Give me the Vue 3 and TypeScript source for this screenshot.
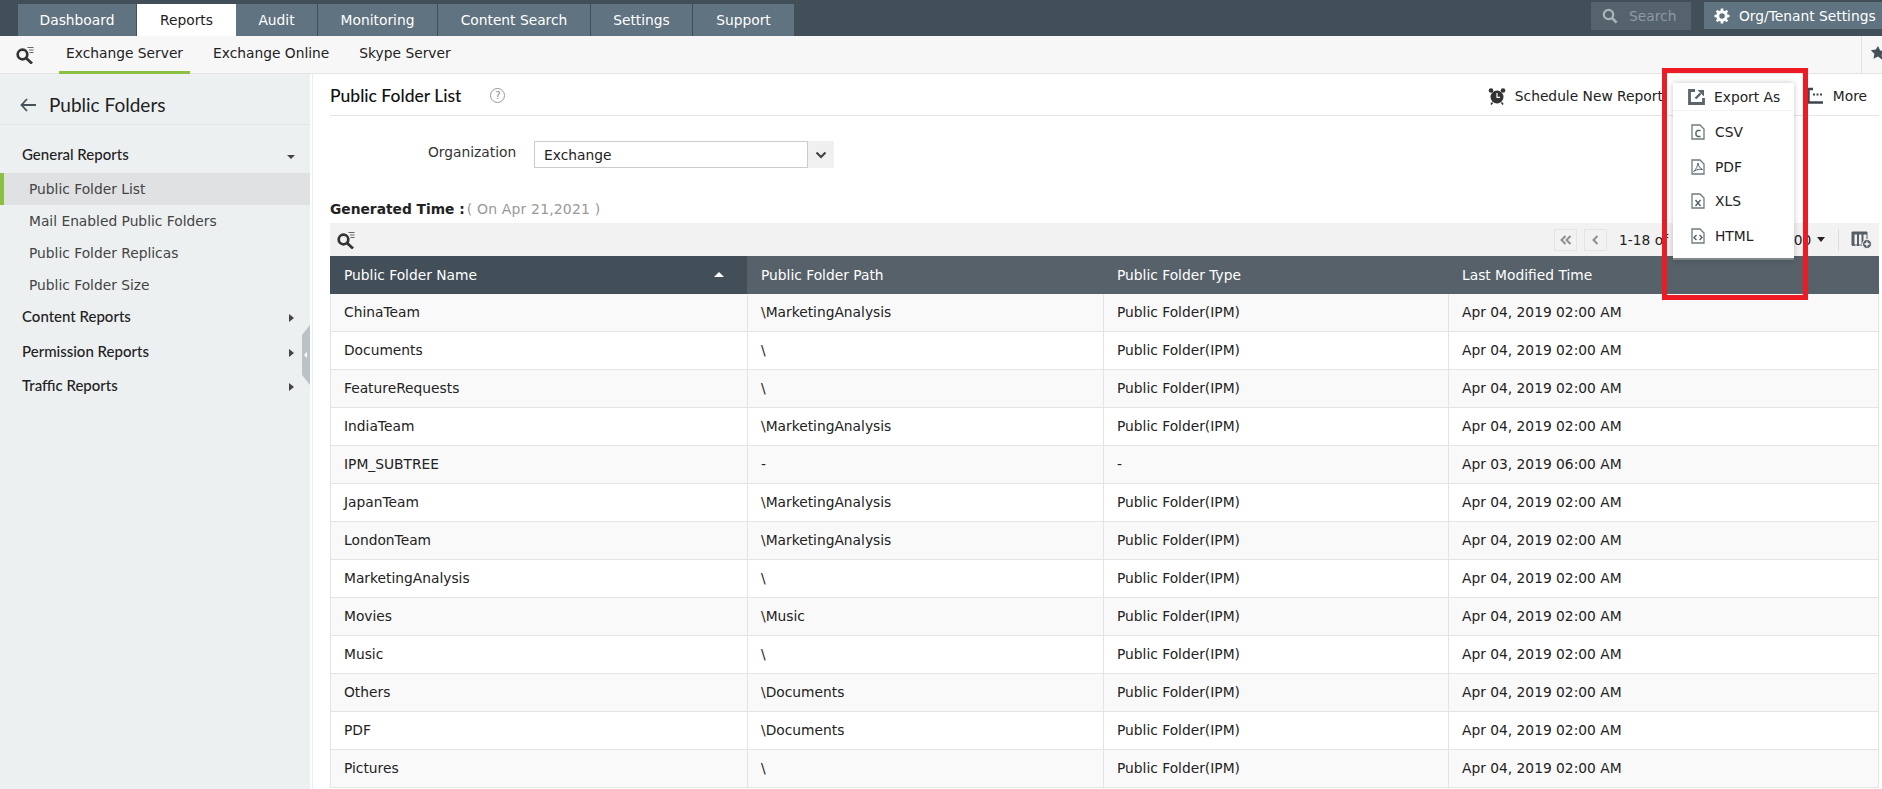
<script setup lang="ts">
const tabs = ['Dashboard', 'Reports', 'Audit', 'Monitoring', 'Content Search', 'Settings', 'Support']
const tabWidths = [119, 99, 82, 120, 153, 102, 102]
const subs = ['Exchange Server', 'Exchange Online', 'Skype Server']
const reports = ['Public Folder List', 'Mail Enabled Public Folders', 'Public Folder Replicas', 'Public Folder Size']
const groups = ['Content Reports', 'Permission Reports', 'Traffic Reports']
const ipm = 'Public Folder(IPM)'
const t = 'Apr 04, 2019 02:00 AM'
const rows = [
  ['ChinaTeam', '\\MarketingAnalysis', ipm, t],
  ['Documents', '\\', ipm, t],
  ['FeatureRequests', '\\', ipm, t],
  ['IndiaTeam', '\\MarketingAnalysis', ipm, t],
  ['IPM_SUBTREE', '-', '-', 'Apr 03, 2019 06:00 AM'],
  ['JapanTeam', '\\MarketingAnalysis', ipm, t],
  ['LondonTeam', '\\MarketingAnalysis', ipm, t],
  ['MarketingAnalysis', '\\', ipm, t],
  ['Movies', '\\Music', ipm, t],
  ['Music', '\\', ipm, t],
  ['Others', '\\Documents', ipm, t],
  ['PDF', '\\Documents', ipm, t],
  ['Pictures', '\\', ipm, t],
]
const exportsList = [
  { label: 'CSV', glyph: 'c' },
  { label: 'PDF', glyph: 'p' },
  { label: 'XLS', glyph: 'x' },
  { label: 'HTML', glyph: 'h' },
]
</script>

<template>
  <div class="page">
    <header class="top">
      <nav class="tabs">
        <div
          v-for="(tab, i) in tabs"
          :key="tab"
          class="tab"
          :class="{ active: tab === 'Reports' }"
          :style="{ width: tabWidths[i] + 'px' }"
        >{{ tab }}</div>
      </nav>
      <div class="top-right">
        <div class="search">
          <svg width="16" height="16" viewBox="0 0 16 16"><circle cx="6.500" cy="6.500" r="4.700" fill="none" stroke="#aab3b8" stroke-width="2.200"/><path d="M10 10l4.600 4.600" stroke="#aab3b8" stroke-width="2.600"/></svg>
          <span>Search</span>
        </div>
        <div class="org">
          <svg width="16" height="16" viewBox="0 0 16 16"><circle cx="8" cy="8" r="4.300" fill="none" stroke="#fff" stroke-width="3"/><path d="M8 0.500v3M8 12.500v3M0.500 8h3M12.500 8h3M2.700 2.700l2.100 2.100M11.200 11.200l2.100 2.100M13.300 2.700l-2.100 2.100M4.800 11.200l-2.100 2.100" stroke="#fff" stroke-width="2.600"/></svg>
          <span>Org/Tenant Settings</span>
        </div>
      </div>
    </header>

    <div class="subnav">
      <svg class="qs" width="18" height="18" viewBox="0 0 18 18"><circle cx="6.500" cy="8.500" r="4.800" fill="none" stroke="#333" stroke-width="2.700"/><path d="M10 12l6 5.500" stroke="#333" stroke-width="2.800"/><path d="M11.500 1.500h6M13 4h4.500M13.500 6.500h4" stroke="#666" stroke-width="1.200"/></svg>
      <div v-for="(s, i) in subs" :key="s" class="sub" :class="{ on: i === 0 }">{{ s }}</div>
      <div class="star-cell">
        <svg width="16" height="16" viewBox="0 0 16 16"><path d="M8 1l2.200 4.600 5 .7-3.600 3.500.9 5L8 11.400 3.500 13.800l.9-5L.8 5.300l5-.7z" fill="#444f57"/></svg>
      </div>
    </div>

    <div class="body">
      <aside class="side">
        <div class="side-head">
          <svg width="16" height="14" viewBox="0 0 16 14"><path d="M7 1L1.500 7 7 13M1.500 7H16" fill="none" stroke="#46525b" stroke-width="1.800"/></svg>
          <span>Public Folders</span>
        </div>
        <div class="group first">
          <span>General Reports</span>
          <i class="caret-down"></i>
        </div>
        <div v-for="(r, i) in reports" :key="r" class="item" :class="{ sel: i === 0 }">{{ r }}</div>
        <div v-for="g in groups" :key="g" class="group">
          <span>{{ g }}</span>
          <i class="caret-right"></i>
        </div>
        <div class="handle"><i></i></div>
      </aside>

      <main class="main">
        <div class="title-row">
          <h1>Public Folder List</h1>
          <span class="help">?</span>
          <div class="actions">
            <svg width="18" height="18" viewBox="0 0 18 18"><circle cx="9" cy="10" r="6.500" fill="#333"/><path d="M9 6v4.300h3" fill="none" stroke="#fff" stroke-width="1.200"/><circle cx="3" cy="3.500" r="2.300" fill="#333"/><circle cx="15" cy="3.500" r="2.300" fill="#333"/><path d="M4.500 15.500l-1.500 2M13.500 15.500l1.500 2" stroke="#333" stroke-width="1.600"/></svg>
            <span class="sched">Schedule New Report</span>
            <svg class="more-ic" width="16" height="17" viewBox="0 0 16 17"><path d="M6 2H1.500v13.500H16" fill="none" stroke="#3d464d" stroke-width="2.400"/><path d="M6 7.500h2M9.500 7.500h2M13 7.500h2" stroke="#3d464d" stroke-width="2"/></svg>
            <span>More</span>
          </div>
        </div>

        <div class="org-row">
          <label>Organization</label>
          <div class="select">
            <span>Exchange</span>
            <div class="sel-btn"><svg width="12" height="8" viewBox="0 0 12 8"><path d="M1.500 1.500L6 6l4.500-4.500" fill="none" stroke="#444" stroke-width="2.200"/></svg></div>
          </div>
        </div>

        <div class="gen"><b>Generated Time :</b><span>( On Apr 21,2021 )</span></div>

        <div class="toolbar">
          <svg width="18" height="18" viewBox="0 0 18 18"><circle cx="6.500" cy="8.500" r="4.800" fill="none" stroke="#333" stroke-width="2.700"/><path d="M10 12l6 5.500" stroke="#333" stroke-width="2.800"/><path d="M11.500 1.500h6M13 4h4.500M13.500 6.500h4" stroke="#666" stroke-width="1.200"/></svg>
          <div class="pager">
            <span class="pg"><svg width="12" height="10" viewBox="0 0 12 10"><path d="M5.500 1L1.500 5l4 4M10.500 1l-4 4 4 4" fill="none" stroke="#8b9094" stroke-width="2"/></svg></span>
            <span class="pg"><svg width="7" height="10" viewBox="0 0 7 10"><path d="M5.500 1L1.500 5l4 4" fill="none" stroke="#8b9094" stroke-width="2"/></svg></span>
            <span class="count">1-18 of 18</span>
            <span class="per">100</span>
            <i class="caret-big"></i>
            <span class="vsep"></span>
            <svg width="21" height="18" viewBox="0 0 21 18"><path d="M1 1h15v2.500H1zM1 3.500h2.500V15H1zM6 3.500h2V15H6zM10.500 3.500h2V13h-2z" fill="#555f66"/><path d="M1 1h15v13H1z" fill="none" stroke="#555f66"/><circle cx="16" cy="13" r="4.500" fill="#555f66" stroke="#f2f2f2"/><path d="M13.500 13h5M16 10.500v5" stroke="#fff" stroke-width="1.300"/></svg>
          </div>
        </div>

        <div class="thead">
          <div class="th c1 sorted">Public Folder Name<i class="caret-up"></i></div>
          <div class="th c2">Public Folder Path</div>
          <div class="th c3">Public Folder Type</div>
          <div class="th c4">Last Modified Time</div>
        </div>
        <div v-for="(row, i) in rows" :key="i" class="tr" :class="{ odd: i % 2 === 0 }">
          <div class="td c1">{{ row[0] }}</div>
          <div class="td c2">{{ row[1] }}</div>
          <div class="td c3">{{ row[2] }}</div>
          <div class="td c4">{{ row[3] }}</div>
        </div>
      </main>
    </div>

    <div class="menu">
      <div class="menu-head">
        <svg width="17" height="16" viewBox="0 0 17 16"><path d="M7 1.500H1.500v13h14V9" fill="none" stroke="#5a646b" stroke-width="2.800"/><path d="M7.500 9.500L12.500 4.500" stroke="#5a646b" stroke-width="2.400"/><path d="M9.500 1h6.500v6.500z" fill="#5a646b"/></svg>
        <span>Export As</span>
      </div>
      <div v-for="e in exportsList" :key="e.label" class="menu-item">
        <svg width="14" height="16" viewBox="0 0 14 16">
          <path d="M1 1h8l4 4v10H1z" fill="#fff" stroke="#6f7a80" stroke-width="1.300"/>
          <path v-if="e.glyph === 'c'" d="M9.500 6.500H6.500L5 8v3l1.500 1.500h3" fill="none" stroke="#555f66" stroke-width="1.400"/>
          <path v-if="e.glyph === 'p'" d="M7 4c-.5 3-1.500 6-4.500 8.500C6 10 9 10 11.500 10.500 9 9.500 7.500 7 7 4z" fill="none" stroke="#555f66" stroke-width="1"/>
          <path v-if="e.glyph === 'x'" d="M4.500 7l5 6M9.500 7l-5 6" fill="none" stroke="#555f66" stroke-width="1.400"/>
          <path v-if="e.glyph === 'h'" d="M5.500 7L3 9.500 5.500 12M8.500 7L11 9.500 8.500 12" fill="none" stroke="#555f66" stroke-width="1.400"/>
        </svg>
        <span>{{ e.label }}</span>
      </div>
    </div>
    <div class="red"></div>
  </div>
</template>

<style>
html, body { margin: 0; background: #fff; overflow: hidden; }
</style>

<style scoped>
.page { position: relative; width: 1882px; height: 789px; overflow: hidden; font-family: "DejaVu Sans", sans-serif; font-size: 13.800px; color: #222; }
.top { height: 36px; background: #434f58; display: flex; justify-content: space-between; padding-left: 18px; box-sizing: border-box; }
.tabs { display: flex; padding-top: 4px; }
.tab { box-sizing: border-box; height: 32px; line-height: 32px; text-align: center; background: #607380; color: #fff; border-right: 1px solid #434f58; }
.tab.active { background: #fff; color: #222; border-right: 0; }
.top-right { display: flex; padding-top: 2px; gap: 13px; }
.search { width: 100px; height: 28px; background: #55636d; color: #8f9aa1; display: flex; align-items: center; gap: 11px; padding-left: 11px; box-sizing: border-box; }
.org { width: 178px; height: 27px; background: #607380; color: #fff; display: flex; align-items: center; gap: 9px; padding-left: 10px; box-sizing: border-box; white-space: nowrap; }
.subnav { height: 38px; box-sizing: border-box; background: #f7f7f7; border-bottom: 1px solid #e4e4e4; display: flex; position: relative; }
.qs { margin: 10px 25px 0 16px; }
.sub { box-sizing: border-box; height: 38px; padding: 0 7px; margin-right: 16px; line-height: 34px; color: #222; white-space: nowrap; }
.sub.on { border-bottom: 3px solid #8cc043; }
.star-cell { margin-left: auto; width: 21px; border-left: 1px solid #e2e2e2; padding: 9px 0 0 8px; box-sizing: border-box; }
.body { display: flex; height: 715px; }
.side { position: relative; width: 310px; margin-right: 20px; background: #ecf0f1; box-shadow: 2px 0 0 #fff, 3px 0 0 #eceeee; flex: none; }
.side-head { height: 51px; box-sizing: border-box; border-bottom: 1px solid #e2e6e7; display: flex; align-items: center; gap: 13px; padding: 11px 0 0 20px; font: 19px Lato, sans-serif; color: #222; }
.group { height: 34.500px; padding: 0 16px 0 22px; display: flex; justify-content: space-between; align-items: center; font: 500 15px Lato, sans-serif; color: #222; box-sizing: border-box; }
.group.first { height: 48px; padding-top: 10px; }
.item { height: 32px; line-height: 32px; padding-left: 29px; color: #444; box-sizing: border-box; white-space: nowrap; }
.item.sel { background: #e0e1e3; border-left: 4px solid #8cc043; padding-left: 25px; }
.caret-down { width: 0; height: 0; border: 4px solid transparent; border-top: 4px solid #444; margin-top: 10px; margin-right: -1px; }
.caret-right { width: 0; height: 0; border: 4px solid transparent; border-left: 5px solid #444; margin-right: -4px; margin-top: 4px; }
.item + .group { margin-top: -2px; }
.handle { position: absolute; right: 0; top: 251px; width: 8px; height: 60px; background: #bcc3c4; clip-path: polygon(0 10px, 100% 0, 100% 100%, 0 50px); }
.handle i { position: absolute; left: 2px; top: 27px; border: 3px solid transparent; border-right: 3px solid #fff; border-left: 0; }
.main { width: 1549px; flex: none; }
.title-row { height: 42px; box-sizing: border-box; border-bottom: 1px solid #e4e4e4; display: flex; align-items: center; padding-top: 2px; }
h1 { margin: 0; font: 500 17.500px Lato, sans-serif; color: #111; }
.help { margin-left: 29px; width: 13px; height: 13px; border: 1px solid #999; border-radius: 50%; color: #888; font-size: 10px; text-align: center; line-height: 13px; }
.actions { margin-left: auto; display: flex; align-items: center; padding-right: 12px; }
.sched { margin: 0 144px 0 9px; white-space: nowrap; }
.more-ic { margin-right: 10px; }
.org-row { display: flex; padding: 25px 0 0 98px; height: 67px; box-sizing: border-box; }
.org-row label { width: 106px; color: #333; padding-top: 3px; }
.select { width: 300px; height: 27px; box-sizing: border-box; border: 1px solid #ccc; display: flex; justify-content: space-between; line-height: 26px; padding-left: 9px; }
.sel-btn { width: 27px; margin: -1px -1px -1px 0; background: #f0f0f0; border-left: 1px solid #ccc; box-sizing: border-box; display: flex; align-items: center; justify-content: center; }
.gen { height: 40px; line-height: 52px; box-sizing: border-box; white-space: nowrap; }
.gen span { color: #999; margin-left: 2px; font-size: 14px; letter-spacing: .15px; }
.toolbar { height: 33px; background: #f2f2f2; display: flex; align-items: center; justify-content: space-between; padding-left: 7px; }
.pager { display: flex; align-items: center; padding-right: 7px; }
.pg { box-sizing: border-box; width: 23px; height: 22px; border: 1px solid #e4e4e4; display: flex; align-items: center; justify-content: center; margin-right: 7px; }
.count { margin-left: 5px; width: 166px; color: #222; white-space: nowrap; }
.per { width: 26px; text-align: right; }
.caret-big { border: 4.500px solid transparent; border-top: 5px solid #222; border-bottom: 0; margin: 0 13px 0 6px; }
.vsep { width: 1px; height: 22px; background: #ddd; margin-right: 12px; }
.thead { display: flex; height: 38px; background: #566169; color: #fff; }
.th, .td { box-sizing: border-box; padding-left: 13px; line-height: 38px; white-space: nowrap; }
.th { padding-left: 14px; }
.c1 { width: 417px; }
.c2 { width: 356px; }
.c3 { width: 345px; }
.c4 { width: 431px; }
.th.sorted { background: #434f58; position: relative; }
.caret-up { position: absolute; right: 23px; top: 16px; border: 5px solid transparent; border-bottom: 5px solid #fff; border-top: 0; }
.tr { display: flex; height: 38px; border-bottom: 1px solid #e4e4e4; box-sizing: border-box; }
.tr.odd { background: #f9f9f9; }
.td { border-left: 1px solid #e4e4e4; line-height: 37px; color: #222; }
.td.c4 { border-right: 1px solid #e4e4e4; }
.menu { position: absolute; left: 1673px; top: 83px; width: 121px; height: 177px; background: #fff; box-shadow: 0 0 6px rgba(0,0,0,.22); border-bottom: 2px solid #7f878c; box-sizing: border-box; }
.menu-head { height: 27px; display: flex; align-items: center; gap: 9px; padding-left: 15px; border-bottom: 1px dotted #e8e8e8; margin-bottom: 4px; white-space: nowrap; }
.menu-item { height: 34.500px; display: flex; align-items: center; gap: 10px; padding-left: 18px; }
.red { position: absolute; left: 1662px; top: 68px; width: 146px; height: 232px; box-sizing: border-box; border: 5px solid #ed1c24; }
</style>
